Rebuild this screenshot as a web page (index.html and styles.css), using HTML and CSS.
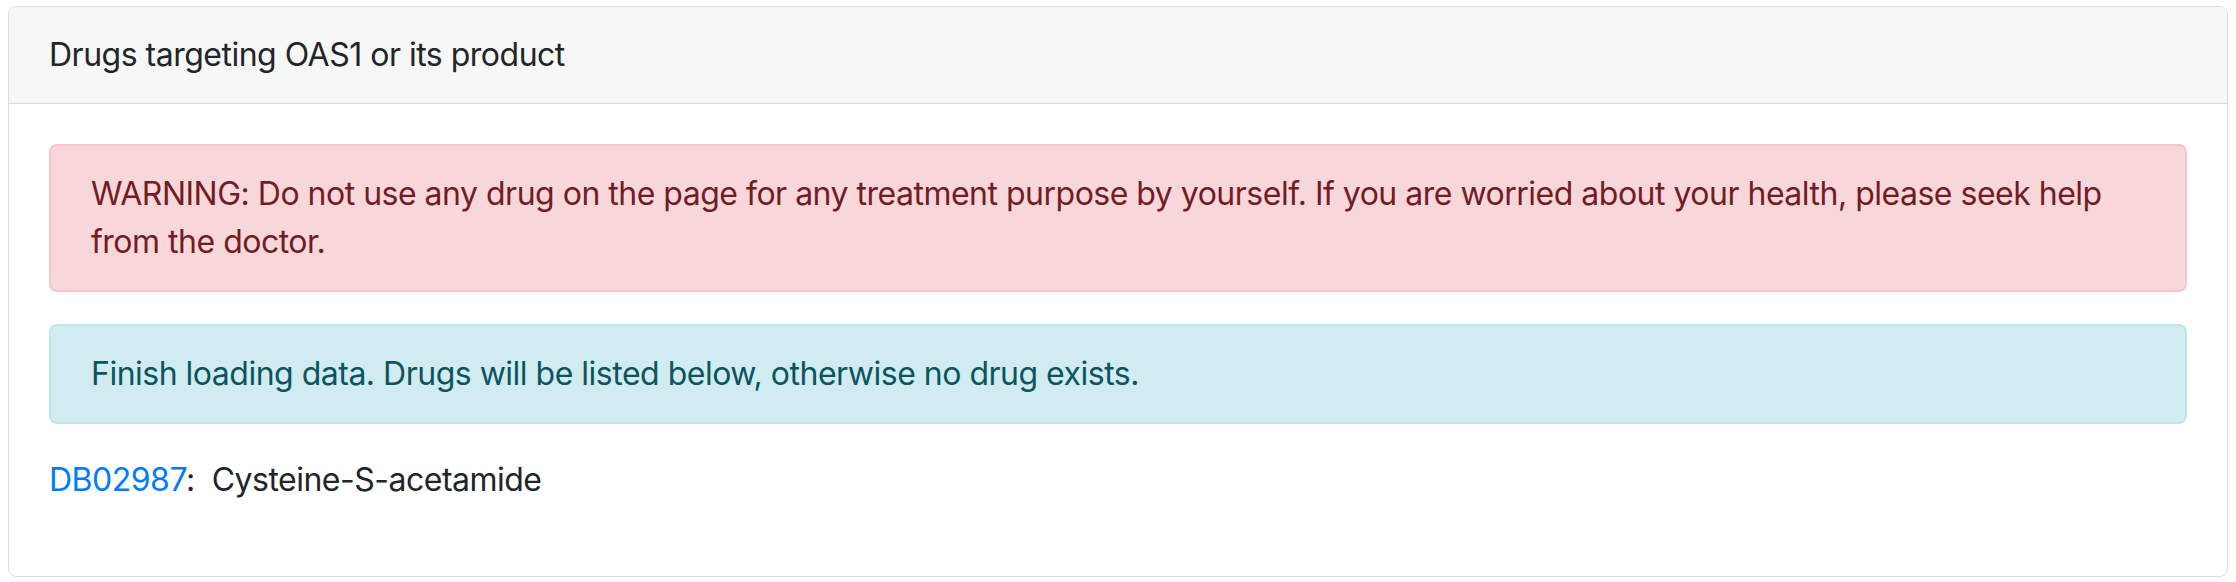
FILE: index.html
```html
<!DOCTYPE html>
<html lang="en">
<head>
<meta charset="utf-8">
<title>Drugs targeting OAS1</title>
<link rel="stylesheet" href="styles.css">
</head>
<body>
<div class="card">
  <div class="card-header">Drugs targeting OAS1 or its product</div>
  <div class="card-body">
    <div class="alert alert-danger">WARNING: Do not use any drug on the page for any treatment purpose by yourself. If you are worried about your health, please seek help from the doctor.</div>
    <div class="alert alert-info">Finish loading data. Drugs will be listed below, otherwise no drug exists.</div>
    <p class="drug"><a href="#" class="drug-link">DB02987</a>:&nbsp; Cysteine-S-acetamide</p>
  </div>
</div>
</body>
</html>
```

FILE: styles.css
```css
* { box-sizing: border-box; }
html, body { margin: 0; padding: 0; background: #fff; }
body {
  padding: 6px 8px 0 8px;
  font-family: Inter, "Noto Sans", "Liberation Sans", sans-serif;
  font-size: 32px;
  line-height: 48px;
  letter-spacing: -0.5px;
  color: #212529;
}
.card {
  border: 1px solid #dcdcdc;
  border-radius: 8px;
  background: #fff;
  overflow: hidden;
}
.card-header {
  background: #f7f7f7;
  border-bottom: 1px solid #dcdcdc;
  padding: 24px 40px;
}
.card-body {
  padding: 40px;
}
.alert {
  border: 2px solid transparent;
  border-radius: 8px;
  padding: 24px 40px;
  margin-bottom: 32px;
}
.alert-danger {
  background: #f8d7da;
  border-color: #f5c6cb;
  color: #721c24;
}
.alert-info {
  background: #d1ecf1;
  border-color: #bee5eb;
  color: #0c5460;
}
.drug {
  margin: 0 0 32px 0;
}
.drug-link {
  color: #007bff;
  text-decoration: none;
}
```
